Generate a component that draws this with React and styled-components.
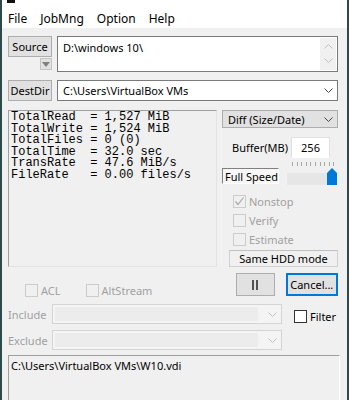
import React from 'react'
import styled, { createGlobalStyle } from 'styled-components'

const uiFont = `'Noto Sans', 'Open Sans', sans-serif`

const GlobalStyle = createGlobalStyle`
  html, body {
    margin: 0;
    padding: 0;
    background: #fff;
  }
  body {
    font-family: ${uiFont};
    font-size: 11px;
    color: #000;
  }
`

const Window = styled.div`
  width: 349px;
  height: 400px;
  box-sizing: border-box;
  border-left: 2px solid #2c4a4c;
  border-right: 2px solid #2c4a4c;
  display: flex;
  flex-direction: column;
  overflow: hidden;
  background: #f0f0f0;
`

const TitleStrip = styled.div`
  height: 9px;
  background: #fff;
  display: flex;
  align-items: flex-start;
  padding-left: 5px;
`

const TitleIcon = styled.span`
  width: 8px;
  height: 3px;
  background: #111;
`

const MenuBar = styled.div`
  height: 19px;
  background: #fff;
  display: flex;
  align-items: center;
  gap: 13px;
  padding-left: 6px;
  font-size: 12px;
`

const Body = styled.div`
  flex: 1;
  display: flex;
  flex-direction: column;
  padding: 8px 9px 0 6px;
  min-height: 0;
`

const Row = styled.div`
  display: flex;
  gap: 5px;
  height: ${p => p.$h}px;
  margin-bottom: ${p => p.$mb || 0}px;
`

const SourceCol = styled.div`
  width: 44px;
  display: flex;
  flex-direction: column;
  align-items: flex-end;
  gap: 1px;
`

const Button = styled.button`
  width: ${p => p.$w || 44}px;
  height: ${p => p.$h || 21}px;
  padding: 0;
  background: #e1e1e1;
  border: ${p => (p.$focus ? '2px solid #0078d7' : '1px solid #adadad')};
  font-family: ${uiFont};
  font-size: 11px;
  color: #000;
  display: flex;
  align-items: center;
  justify-content: center;
  gap: 2px;
`

const DropBtn = styled.span`
  width: 12px;
  height: 12px;
  box-sizing: border-box;
  background: #e1e1e1;
  border: 1px solid #c4c4c4;
  display: flex;
  align-items: center;
  justify-content: center;
`

const TextArea = styled.div`
  flex: 1;
  background: #fff;
  border: 1px solid #7a7a7a;
  display: flex;
`

const AreaText = styled.div`
  flex: 1;
  padding: 3px 5px;
`

const ScrollStrip = styled.div`
  width: 16px;
  margin: 1px;
  background: #f0f0f0;
  display: flex;
  flex-direction: column;
  justify-content: space-between;
  align-items: center;
  padding: 6px 0 7px;
`

const Combo = styled.div`
  flex: ${p => (p.$w ? 'none' : 1)};
  width: ${p => (p.$w ? `${p.$w}px` : 'auto')};
  height: ${p => p.$h || 21}px;
  box-sizing: border-box;
  background: ${p => (p.$disabled ? '#f4f4f4' : p.$gray ? '#e1e1e1' : '#fff')};
  border: 1px solid ${p => (p.$disabled ? '#d4d4d4' : p.$gray ? '#adadad' : '#7a7a7a')};
  display: flex;
  align-items: center;
  justify-content: space-between;
  padding: 0 4px 0 5px;
`

const ComboField = styled.span`
  flex: 1;
  align-self: stretch;
  margin: 2px 10px 2px -3px;
  background: #ececec;
`

const MainGrid = styled.div`
  display: grid;
  grid-template-columns: 209px 116px;
  column-gap: 5px;
  row-gap: 6px;
`

const StatsBox = styled.pre`
  margin: 0;
  height: 157px;
  box-sizing: border-box;
  border-top: 1px solid #a0a0a0;
  border-left: 1px solid #a0a0a0;
  border-right: 1px solid #e3e3e3;
  border-bottom: 1px solid #e3e3e3;
  padding: 1px 2px;
  font-family: 'Liberation Mono', 'DejaVu Sans Mono', monospace;
  font-size: 12px;
  line-height: 11.6px;
  color: #000;
`

const RightCol = styled.div`
  display: flex;
  flex-direction: column;
`

const BufferRow = styled.div`
  margin-top: 9px;
  height: 21px;
  display: flex;
  align-items: center;
  padding-left: 10px;
`

const Label = styled.span`
  flex: ${p => (p.$grow ? 1 : 'none')};
  color: ${p => (p.$disabled ? '#a0a0a0' : '#000')};
  width: ${p => (p.$w ? `${p.$w}px` : 'auto')};
`

const NumInput = styled.div`
  width: 39px;
  height: 21px;
  box-sizing: border-box;
  margin-right: 8px;
  background: #fff;
  border: 1px solid #e0e0e0;
  border-bottom-color: #fff;
  display: flex;
  align-items: center;
  justify-content: center;
`

const SpeedRow = styled.div`
  margin-top: 4px;
  height: 23px;
  display: flex;
  align-items: flex-end;
  gap: 8px;
`

const SpeedBox = styled.div`
  width: 58px;
  height: 16px;
  box-sizing: border-box;
  margin-bottom: 1px;
  background: #f7f7f7;
  border-top: 1px solid #808080;
  border-left: 1px solid #808080;
  border-right: 1px solid #fff;
  border-bottom: 1px solid #fff;
  display: flex;
  align-items: center;
  padding-left: 2px;
  white-space: nowrap;
`

const Slider = styled.div`
  position: relative;
  width: 52px;
  height: 23px;
  display: flex;
  flex-direction: column;
  justify-content: space-between;
`

const Ticks = styled.div`
  height: 4px;
  margin: 0 4px 0 5px;
  background: repeating-linear-gradient(
    to right,
    #a8a8a8 0,
    #a8a8a8 1px,
    transparent 1px,
    transparent 4.6px
  );
`

const Track = styled.div`
  width: 42px;
  height: 12px;
  background: #e6e6e6;
`

const Thumb = styled.svg`
  position: absolute;
  right: 1px;
  bottom: 0;
`

const Checks = styled.div`
  margin-top: 7px;
  padding-left: 11px;
  display: flex;
  flex-direction: column;
`

const CheckRow = styled.div`
  height: 19px;
  display: flex;
  align-items: center;
  gap: 3px;
`

const Box = styled.span`
  width: 13px;
  height: 13px;
  box-sizing: border-box;
  border: 1px solid ${p => (p.$disabled ? '#cccccc' : '#333')};
  background: ${p => (p.$disabled ? 'transparent' : '#fff')};
  display: flex;
  align-items: center;
  justify-content: center;
`

const SameHdd = styled.div`
  margin: 1px 0 0 7px;
  height: 17px;
  box-sizing: border-box;
  border: 1px solid #d0d0d0;
  border-top-color: #c0c0c0;
  display: flex;
  align-items: center;
  justify-content: center;
`

const OptionRow = styled.div`
  display: flex;
  align-items: center;
  gap: 25px;
  padding: 8px 0 0 17px;
`

const ButtonRow = styled.div`
  display: flex;
  gap: 11px;
  padding-left: 14px;
`

const PauseBars = styled.span`
  width: 2px;
  height: 10px;
  background: #505050;
`

const FilterSection = styled.div`
  margin-top: 4px;
  display: flex;
  gap: 12px;
`

const FilterRows = styled.div`
  display: flex;
  flex-direction: column;
  gap: 6px;
`

const FilterRow = styled.div`
  display: flex;
  align-items: center;
  height: 20px;
`

const FilterCheck = styled(CheckRow)`
  margin-top: 3px;
`

const LogBox = styled.div`
  flex: 1;
  margin: 5px -2px 0 0;
  border-top: 1px solid #a0a0a0;
  border-left: 1px solid #a0a0a0;
  border-right: 1px solid #fff;
  padding: 2px 2px;
`

const Chevron = ({ color = '#444', up }) => (
  <svg width="9" height="5" viewBox="0 0 9 5">
    <polyline
      points={up ? '0.5,4.5 4.5,0.5 8.5,4.5' : '0.5,0.5 4.5,4.5 8.5,0.5'}
      fill="none"
      stroke={color}
      strokeWidth="1"
    />
  </svg>
)

const Check = ({ label, checked, disabled }) => (
  <CheckRow>
    <Box $disabled={disabled}>
      {checked && (
        <svg width="11" height="11" viewBox="0 0 11 11">
          <polyline points="1.5,5.5 4,8.5 9.5,1.5" fill="none" stroke="#a8a8a8" strokeWidth="1.2" />
        </svg>
      )}
    </Box>
    <Label $disabled={disabled}>{label}</Label>
  </CheckRow>
)

const stats = `TotalRead  = 1,527 MiB
TotalWrite = 1,524 MiB
TotalFiles = 0 (0)
TotalTime  = 32.0 sec
TransRate  = 47.6 MiB/s
FileRate   = 0.00 files/s`

export default function App() {
  return (
    <>
      <GlobalStyle />
      <Window>
        <TitleStrip>
          <TitleIcon />
        </TitleStrip>
        <MenuBar>
          <span>File</span>
          <span>JobMng</span>
          <span>Option</span>
          <span>Help</span>
        </MenuBar>
        <Body>
          <Row $h={36} $mb={8}>
            <SourceCol>
              <Button>Source</Button>
              <DropBtn>
                <svg width="8" height="5" viewBox="0 0 8 5">
                  <polygon points="0,0 8,0 4,5" fill="#808080" />
                </svg>
              </DropBtn>
            </SourceCol>
            <TextArea>
              <AreaText>D:\windows 10\</AreaText>
              <ScrollStrip>
                <Chevron up color="#c0c0c0" />
                <Chevron color="#c0c0c0" />
              </ScrollStrip>
            </TextArea>
          </Row>
          <Row $h={21} $mb={9}>
            <Button>DestDir</Button>
            <Combo>
              <span>C:\Users\VirtualBox VMs</span>
              <Chevron />
            </Combo>
          </Row>

          <MainGrid>
            <StatsBox>{stats}</StatsBox>
            <RightCol>
              <Combo $gray $h={20}>
                <span>Diff (Size/Date)</span>
                <Chevron />
              </Combo>
              <BufferRow>
                <Label $grow>Buffer(MB)</Label>
                <NumInput>256</NumInput>
              </BufferRow>
              <SpeedRow>
                <SpeedBox>Full Speed</SpeedBox>
                <Slider>
                  <Ticks />
                  <Track />
                  <Thumb width="10" height="17" viewBox="0 0 10 17">
                    <polygon points="0,5 5,0 10,5 10,17 0,17" fill="#0078d7" />
                  </Thumb>
                </Slider>
              </SpeedRow>
              <Checks>
                <Check label="Nonstop" checked disabled />
                <Check label="Verify" disabled />
                <Check label="Estimate" disabled />
              </Checks>
              <SameHdd>Same HDD mode</SameHdd>
            </RightCol>

            <OptionRow>
              <Check label="ACL" disabled />
              <Check label="AltStream" disabled />
            </OptionRow>
            <ButtonRow>
              <Button $w={39} $h={23}>
                <PauseBars />
                <PauseBars />
              </Button>
              <Button $w={53} $h={23} $focus>Cancel...</Button>
            </ButtonRow>
          </MainGrid>

          <FilterSection>
            <FilterRows>
              <FilterRow>
                <Label $disabled $w={44}>Include</Label>
                <Combo $disabled $w={230} $h={20}>
                  <ComboField />
                  <Chevron color="#c0c0c0" />
                </Combo>
              </FilterRow>
              <FilterRow>
                <Label $disabled $w={44}>Exclude</Label>
                <Combo $disabled $w={230} $h={20}>
                  <ComboField />
                  <Chevron color="#c0c0c0" />
                </Combo>
              </FilterRow>
            </FilterRows>
            <FilterCheck>
              <Check label="Filter" />
            </FilterCheck>
          </FilterSection>

          <LogBox>C:\Users\VirtualBox VMs\W10.vdi</LogBox>
        </Body>
      </Window>
    </>
  )
}
